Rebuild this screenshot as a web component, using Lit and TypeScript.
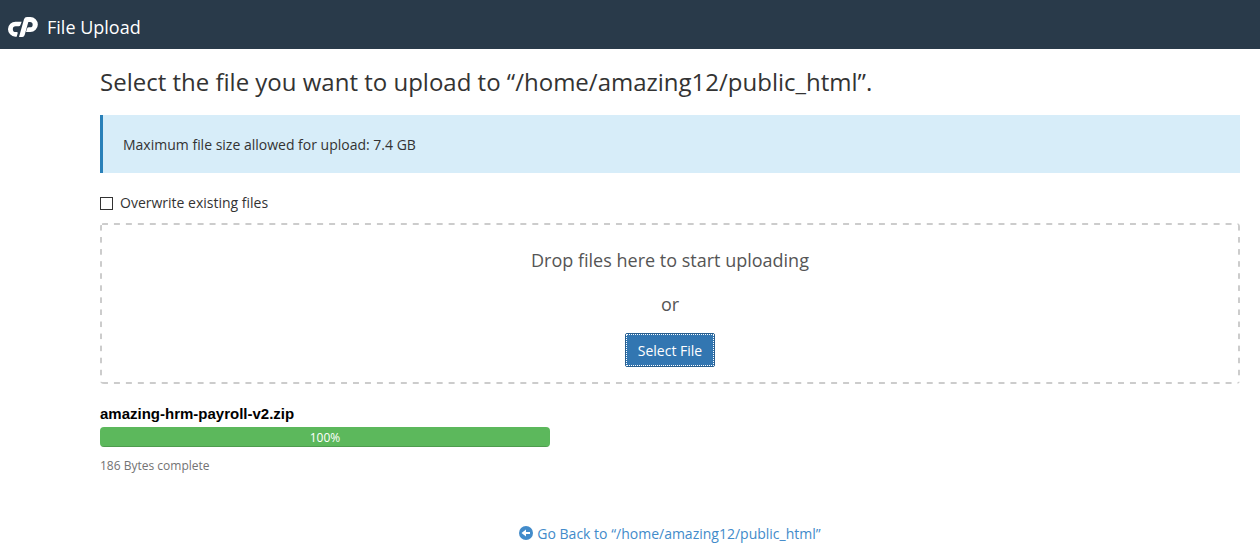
import { LitElement, html, css } from "lit";
import { customElement, property, state } from "lit/decorators.js";

@customElement("upload-progress")
class UploadProgress extends LitElement {
  @property() name = "";
  @property() size = "";
  @property({ type: Number }) percent = 0;

  static styles = css`
    :host {
      display: block;
      max-width: 450px;
    }
    .name {
      font: bold 15px/20px "Liberation Sans", Arial, sans-serif;
      color: #000;
    }
    .track {
      height: 20px;
      margin: 3px 0 9px;
      border-radius: 4px;
      background: #f5f5f5;
      overflow: hidden;
    }
    .fill {
      height: 100%;
      background: #5cb85c;
      box-shadow: inset 0 -1px 0 rgba(0, 0, 0, 0.15);
      color: #fff;
      font-size: 12px;
      line-height: 22px;
      text-align: center;
    }
    .status {
      font-size: 12px;
      line-height: 20px;
      color: #737373;
    }
  `;

  render() {
    return html`
      <div class="name">${this.name}</div>
      <div class="track" role="progressbar" aria-valuenow=${this.percent} aria-label=${this.name}>
        <div class="fill" style="width: ${this.percent}%">${this.percent}%</div>
      </div>
      <div class="status">${this.size} complete</div>
    `;
  }
}

@customElement("app-root")
class AppRoot extends LitElement {
  @state() private directory = "/home/amazing12/public_html";
  @state() private uploads = [{ name: "amazing-hrm-payroll-v2.zip", size: "186 Bytes", percent: 100 }];

  static styles = css`
    :host {
      display: block;
      background: #fff;
      color: #333;
      font: 14px/20px "Open Sans", "Noto Sans", sans-serif;
    }
    .bar {
      display: flex;
      align-items: center;
      gap: 9px;
      height: 49px;
      padding: 5px 8px 0;
      box-sizing: border-box;
      background: #293a4a;
      color: #fff;
      font-size: 18px;
    }
    .logo {
      width: 30px;
      height: 20px;
      fill: #fff;
    }
    main {
      padding: 16px 20px 0 100px;
    }
    h1 {
      margin: 0 0 16px;
      font-size: 24px;
      line-height: 34px;
      font-weight: 400;
    }
    .notice {
      padding: 20px 20px 18px;
      border-left: 3px solid #2980b9;
      background: #d7edf9;
    }
    .option {
      display: flex;
      align-items: center;
      width: max-content;
      gap: 7px;
      margin: 20px 0 10px;
    }
    .option input {
      appearance: none;
      width: 13px;
      height: 13px;
      margin: 0;
      border: 1px solid #333;
      background: #fff;
    }
    .option input:checked {
      background: #333;
      box-shadow: inset 0 0 0 2px #fff;
    }
    /* Evenly spaced dashes, fitted to a whole number along each side */
    .drop {
      --across: linear-gradient(to right, #ccc 50%, transparent 50%);
      --down: linear-gradient(to bottom, #ccc 50%, transparent 50%);
      display: flex;
      flex-direction: column;
      align-items: center;
      gap: 14px;
      padding: 20px 20px 15px;
      border: 2px solid transparent;
      border-radius: 4px;
      background-image: var(--across), var(--across), var(--down), var(--down);
      background-size: 12px 2px, 12px 2px, 2px 12px, 2px 12px;
      background-position: left 0 top -2px, left 0 bottom -2px, left -2px top 0, right -2px top 0;
      background-repeat: round no-repeat, round no-repeat, no-repeat round, no-repeat round;
      background-origin: padding-box;
      background-clip: border-box;
      color: #555;
      font-size: 18px;
      line-height: 30px;
    }
    .drop p {
      margin: 0;
    }
    .select {
      height: 34px;
      padding: 2px 12px 0;
      border: 1px solid #285e8e;
      border-radius: 2px;
      outline: 1px dotted #fff;
      outline-offset: -2px;
      background: #3276b1;
      color: #fff;
      font: inherit;
      font-size: 14px;
      line-height: 20px;
    }
    upload-progress {
      margin-top: 20px;
    }
    footer {
      display: flex;
      justify-content: center;
      margin-top: 48px;
      padding: 0 20px 0 100px;
    }
    footer a {
      display: flex;
      align-items: center;
      gap: 4px;
      color: #428bca;
      text-decoration: none;
    }
    .back {
      width: 14px;
      height: 14px;
      margin-bottom: 2px;
      fill: #428bca;
    }
    .arrow {
      fill: #fff;
    }
  `;

  render() {
    return html`
      <header class="bar">
        <svg class="logo" viewBox="0 0 90 60" aria-hidden="true">
          <path d="M23 14H41L37 25Q36 28 32 28H23A8 8 0 0 0 23 45H26Q30 45 29 49L26 59H22A22 22 0 0 1 23 14Z" />
          <path d="M33 60L48 7Q50 0 57 0H67A22 22 0 0 1 67 45H54L57 35Q58 31 63 31H66A8 8 0 0 0 66 15H61L50 54Q48 60 43 60Z" />
        </svg>
        <span>File Upload</span>
      </header>
      <main>
        <h1>Select the file you want to upload to “${this.directory}”.</h1>
        <div class="notice">Maximum file size allowed for upload: 7.4 GB</div>
        <label class="option"><input type="checkbox" />Overwrite existing files</label>
        <section class="drop">
          <p>Drop files here to start uploading</p>
          <p>or</p>
          <button class="select" type="button">Select File</button>
        </section>
        ${this.uploads.map(
          (file) => html`<upload-progress .name=${file.name} .size=${file.size} .percent=${file.percent}></upload-progress>`
        )}
      </main>
      <footer>
        <a href="#">
          <svg class="back" viewBox="0 0 14 14" aria-hidden="true">
            <circle cx="7" cy="7" r="7" />
            <path class="arrow" d="M2.5 7L7 3.5V6H11V8H7V10.5Z" />
          </svg>
          <span>Go Back to “${this.directory}”</span>
        </a>
      </footer>
    `;
  }
}
